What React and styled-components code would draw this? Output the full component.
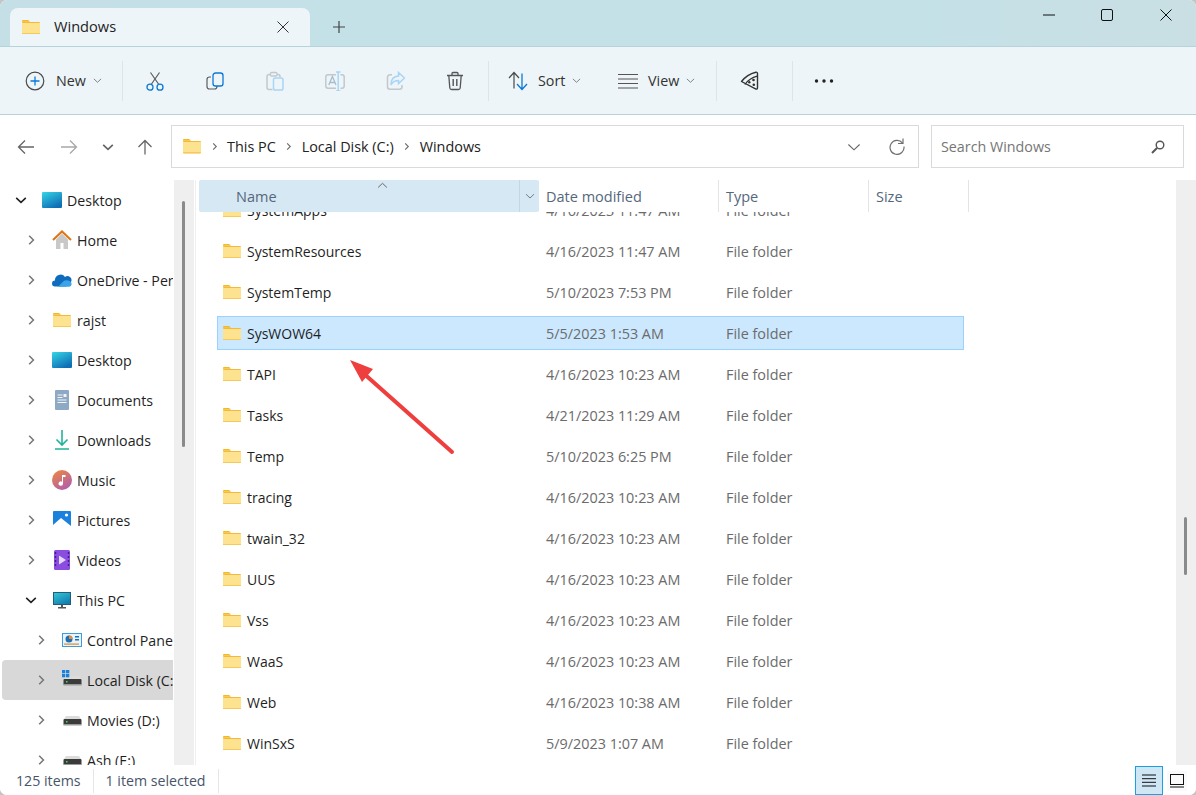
import React from "react";
import styled, { createGlobalStyle } from "styled-components";

const Global = createGlobalStyle`
  html, body { margin: 0; padding: 0; background: #c4c4c4; }
  body { font-family: "Open Sans", "Noto Sans", sans-serif; font-size: 14px; color: #1b1b1b; }
  svg { display: block; flex: none; }
`;

const Win = styled.div`
  position: relative;
  width: 1196px;
  height: 795px;
  display: flex;
  flex-direction: column;
  background: #fff;
  border-radius: 7px;
  overflow: hidden;
`;

const TitleBar = styled.div`
  height: 46px;
  display: flex;
  align-items: flex-end;
  padding-left: 10px;
  background: linear-gradient(90deg, #c4dfe5 0, #c4e1e8 20%, #c4e1e8 75%, #c9dfe3 100%);
  border-bottom: 1px solid #b6d3db;
`;

const Tab = styled.div`
  width: 300px;
  height: 38px;
  box-sizing: border-box;
  padding: 0 21px 0 12px;
  display: flex;
  align-items: center;
  background: #eef5f8;
  border-radius: 8px 8px 0 0;
`;

const TabTitle = styled.span`
  margin-left: 14px;
  flex: 1;
  font-size: 14.6px;
  font-weight: 500;
  color: #222;
  padding-bottom: 3px;
`;

const PlusButton = styled.div`
  width: 58px;
  height: 38px;
  display: flex;
  align-items: center;
  justify-content: center;
`;

const WinControls = styled.div`
  margin-left: auto;
  align-self: flex-start;
  display: flex;
  padding-right: 1px;
`;

const WinButton = styled.div`
  width: 58.5px;
  height: 29px;
  display: flex;
  align-items: center;
  justify-content: center;
`;

const Toolbar = styled.div`
  height: 68px;
  box-sizing: border-box;
  display: flex;
  align-items: center;
  background: #edf5f8;
  border-bottom: 1px solid #b6d3db;
`;

const ToolSep = styled.div`
  width: 1px;
  height: 40px;
  background: #dde5e8;
  flex: none;
`;

const IconButton = styled.div`
  width: 60px;
  height: 40px;
  display: flex;
  align-items: center;
  justify-content: center;
  flex: none;
`;

const ToolButton = styled.div`
  width: ${(p) => p.$w}px;
  padding-left: ${(p) => p.$pad}px;
  box-sizing: border-box;
  display: flex;
  align-items: center;
  flex: none;
  height: 40px;
  color: #333;
  font-size: 14.3px;
`;

const ToolLabel = styled.span`
  margin-left: ${(p) => p.$gap || 10}px;
  margin-right: 7px;
`;

const Group = styled.div`
  display: flex;
  align-items: center;
  margin: ${(p) => p.$m || "0"};
`;

const NavRow = styled.div`
  height: 65px;
  box-sizing: border-box;
  padding: 10px 12px 0 0;
  display: flex;
  align-items: flex-start;
`;

const NavButtons = styled.div`
  width: 171px;
  height: 43px;
  flex: none;
  display: grid;
  grid-template-columns: 5px 42px 44px 34px 40px;
  align-items: center;
  justify-items: center;
`;

const AddressBox = styled.div`
  width: 748px;
  height: 43px;
  box-sizing: border-box;
  border: 1.5px solid #dadada;
  display: flex;
  align-items: center;
  padding-left: 11px;
  color: #222;
  font-size: 14.4px;
`;

const Crumb = styled.span`
  padding-bottom: 1px;
`;

const CrumbChevron = styled.div`
  width: 26px;
  display: flex;
  justify-content: center;
`;

const AddressTools = styled.div`
  margin-left: auto;
  display: flex;
  align-items: center;
  gap: 27px;
  padding-right: 13px;
`;

const SearchBox = styled.div`
  margin-left: 12px;
  width: 253px;
  height: 43px;
  box-sizing: border-box;
  border: 1.5px solid #dadada;
  display: flex;
  align-items: center;
  justify-content: space-between;
  padding: 0 18px 0 9px;
  color: #767676;
  font-size: 14.3px;
`;

const Body = styled.div`
  flex: 1;
  min-height: 0;
  display: flex;
`;

const Tree = styled.div`
  width: 173px;
  flex: none;
  overflow: hidden;
`;

const TreeRow = styled.div`
  width: 171px;
  height: 40px;
  margin-left: 2px;
  box-sizing: border-box;
  padding-left: ${(p) => 12 + p.$level * 10}px;
  display: flex;
  align-items: center;
  white-space: nowrap;
  overflow: hidden;
  font-size: 14.2px;
  color: #1f1f1f;
  background: ${(p) => (p.$active ? "#d8d8d8" : "transparent")};
  border-radius: 4px 0 0 4px;
`;

const TreeChevron = styled.div`
  width: 14px;
  display: flex;
  justify-content: center;
  flex: none;
  margin-right: 14px;
`;

const TreeIcon = styled.div`
  width: 20px;
  display: flex;
  justify-content: center;
  flex: none;
  margin-right: 5px;
`;

const Gutter = styled.div`
  width: ${(p) => p.$w}px;
  flex: none;
  margin-left: ${(p) => p.$ml || 0}px;
  background: #efefef;
  display: flex;
  flex-direction: column;
`;

const Thumb = styled.div`
  width: 3px;
  height: ${(p) => p.$h}px;
  margin: ${(p) => p.$top}px 0 0 ${(p) => p.$left}px;
  background: #8a8a8a;
  border-radius: 2px;
`;

const Main = styled.div`
  flex: 1;
  min-width: 0;
  display: flex;
  flex-direction: column;
  border-left: 1px solid #efefef;
  margin-left: 1px;
  padding-left: 3px;
`;

const Header = styled.div`
  height: 32px;
  flex: none;
  display: flex;
  font-size: 14.5px;
  color: #55677b;
  background: #fff;
`;

const HeadCell = styled.div`
  position: relative;
  width: ${(p) => p.$w}px;
  box-sizing: border-box;
  padding-left: ${(p) => p.$pad}px;
  display: flex;
  align-items: center;
  background: ${(p) => (p.$name ? "#d7e8f5" : "transparent")};
  border-radius: ${(p) => (p.$name ? "2px" : "0")};
  border-right: ${(p) => (p.$name ? "none" : "1px solid #e4e4e4")};
`;

const SortCaret = styled.div`
  position: absolute;
  left: 178px;
  top: 0;
`;

const HeadSplit = styled.div`
  position: absolute;
  right: 0;
  top: 0;
  bottom: 0;
  width: 19px;
  border-left: 1px solid #c3d6e4;
  display: flex;
  align-items: center;
  justify-content: center;
`;

const FileList = styled.div`
  flex: 1;
  min-height: 0;
  overflow: hidden;
`;

const FileScroll = styled.div`
  margin-top: -19px;
  display: flex;
  flex-direction: column;
  gap: 7px;
`;

const FileRow = styled.div`
  width: 747px;
  height: 34px;
  margin-left: 18px;
  flex: none;
  box-sizing: border-box;
  display: flex;
  align-items: center;
  font-size: 14.4px;
  background: ${(p) => (p.$selected ? "#cce8ff" : "transparent")};
  border: 1px solid ${(p) => (p.$selected ? "#99d1ff" : "transparent")};
`;

const FileName = styled.div`
  width: 328px;
  padding-left: 5px;
  box-sizing: border-box;
  display: flex;
  align-items: center;
  gap: 6px;
  font-size: 14px;
  color: #1f1f1f;
`;

const FileMeta = styled.div`
  width: ${(p) => p.$w}px;
  color: #6b6b6b;
  white-space: nowrap;
`;

const StatusBar = styled.div`
  height: 30px;
  flex: none;
  box-sizing: border-box;
  padding: 1px 9px 0 16px;
  display: flex;
  align-items: center;
  font-size: 14.2px;
  color: #47556a;
  background: #fff;
`;

const StatusText = styled.span`
  padding-right: 12px;
  margin-right: 12px;
  border-right: 1px solid #e6e6e6;
  line-height: 24px;
`;

const ViewToggle = styled.div`
  margin-left: auto;
  display: flex;
  align-items: center;
  gap: 4px;
`;

const ViewButton = styled.div`
  width: ${(p) => (p.$on ? 28 : 20)}px;
  height: ${(p) => (p.$on ? 29 : 20)}px;
  box-sizing: border-box;
  display: flex;
  align-items: center;
  justify-content: center;
  background: ${(p) => (p.$on ? "#cfe7f5" : "#fafafa")};
  border: ${(p) => (p.$on ? "1px solid #1ba1e2" : "none")};
`;

const ArrowLayer = styled.svg`
  position: absolute;
  left: 340px;
  top: 350px;
  pointer-events: none;
`;

const Folder = ({ size = 18 }) => (
  <svg width={size} height={size * 0.8} viewBox="0 0 18 14.4">
    <path d="M0 1.2C0 .5.5 0 1.2 0h4.4c.5 0 .9.2 1.2.5L8 1.8h-8z" fill="#f5b81f" />
    <rect x="0" y="2" width="18" height="12.4" rx="1" fill="#f3b93a" />
    <rect x="0" y="3" width="18" height="10.4" fill="#fde28f" />
  </svg>
);

const Chev = ({ dir = "right", color = "#808080", s = 10, w = 1.4 }) => {
  const paths = {
    right: "M3.5 1.5L7 5 3.5 8.5",
    down: "M1 3.2L5 7l4-3.8",
    up: "M1 6.8L5 3l4 3.8",
  };
  return (
    <svg width={s} height={s} viewBox="0 0 10 10">
      <path d={paths[dir]} fill="none" stroke={color} strokeWidth={w} />
    </svg>
  );
};

const I20 = ({ children }) => (
  <svg width="20" height="20" viewBox="0 0 20 20" fill="none">
    {children}
  </svg>
);

const IconNew = () => (
  <I20>
    <circle cx="10" cy="10" r="8.8" stroke="#4a4a4a" strokeWidth="1.2" />
    <path d="M10 5.5v9M5.5 10h9" stroke="#0a78d4" strokeWidth="1.3" />
  </I20>
);
const IconCut = () => (
  <I20>
    <path d="M5.5 1.5L13.5 13M14.5 1.5L6.5 13" stroke="#5c5c5c" strokeWidth="1.2" />
    <circle cx="5" cy="16.2" r="3" stroke="#0a78d4" strokeWidth="1.3" />
    <circle cx="15" cy="16.2" r="3" stroke="#0a78d4" strokeWidth="1.3" />
  </I20>
);
const IconCopy = () => (
  <I20>
    <path d="M6 6H4.500A2.500 2.500 0 002 8.500v7A2.500 2.500 0 004.500 18h5A2.500 2.500 0 0012 15.500V15" stroke="#5c5c5c" strokeWidth="1.2" />
    <rect x="8" y="2" width="10" height="13" rx="2.600" stroke="#0a78d4" strokeWidth="1.3" />
  </I20>
);
const IconPaste = () => (
  <I20>
    <path d="M6 3.500H4A2 2 0 002 5.500v11A2 2 0 004 18.500h3.500" stroke="#c2c8cb" strokeWidth="1.500" />
    <path d="M12 3.500h1A2 2 0 0115 5.500V6" stroke="#c2c8cb" strokeWidth="1.500" />
    <rect x="5.500" y="1.500" width="6.500" height="3.500" rx="1" stroke="#c2c8cb" strokeWidth="1.300" />
    <rect x="8.500" y="7" width="9.500" height="12" rx="1.800" stroke="#a8d5f5" strokeWidth="1.500" />
  </I20>
);
const IconRename = () => (
  <I20>
    <path d="M11 3.800H3A2.300 2.300 0 00.8 6v9A2.300 2.300 0 003 17.200H11M15.500 3.800H17A2.300 2.300 0 0119.200 6v9a2.300 2.300 0 01-2.200 2.200h-1.500" stroke="#c2c8cb" strokeWidth="1.500" />
    <path d="M3.800 14l3.600-8.500L11 14M5 11.500h4.800" stroke="#a9bccb" strokeWidth="1.300" />
    <path d="M11 1h4.500M11 20h4.500M13.200 1v19" stroke="#a8d5f5" strokeWidth="1.500" />
  </I20>
);
const IconShare = () => (
  <I20>
    <path d="M7 3.800H5A2.500 2.500 0 002.500 6.300v9.400A2.500 2.500 0 005 18.200h9.500a2.500 2.500 0 002.500-2.500V14" stroke="#c2c8cb" strokeWidth="1.500" />
    <path d="M13.500 1.500L19.500 7l-6 5.500V9.500C10 9.500 7.500 11 6 14c0-5.500 3-8.800 7.500-9z" stroke="#a8d5f5" strokeWidth="1.500" />
  </I20>
);
const IconTrash = () => (
  <I20>
    <path d="M2 4.500h16M7 4V2.500A1 1 0 018 1.500h4a1 1 0 011 1V4M3.800 4.500l1 12.500a1.800 1.800 0 001.800 1.500h6.800a1.800 1.800 0 001.800-1.500l1-12.500" stroke="#555" strokeWidth="1.300" />
    <path d="M8.200 8v7M11.800 8v7" stroke="#555" strokeWidth="1.400" />
  </I20>
);
const IconSort = () => (
  <I20>
    <path d="M1 7l5-5.500L11 7M6 1.500v16" stroke="#4a4a4a" strokeWidth="1.200" />
    <path d="M9 13l5 5.500 5-5.500M14 18.500v-16" stroke="#0a78d4" strokeWidth="1.300" />
  </I20>
);
const IconView = () => (
  <I20>
    <path d="M0 3.500h20M0 8h20M0 12.500h20M0 17h20" stroke="#555" strokeWidth="1.200" />
  </I20>
);
const IconPizza = () => (
  <I20>
    <path d="M1.500 10.500C5 6 10.500 2.500 15.800 1.200c1-.2 1.700.4 1.700 1.300V16.800c0 1.200-1.200 1.700-2 1z" stroke="#333" strokeWidth="1.400" strokeLinejoin="round" />
    <path d="M4.800 13.500C7.500 9.800 12 6.500 17.200 5.200" stroke="#333" strokeWidth="1.200" />
    <circle cx="13.500" cy="9" r="1.300" fill="#333" />
    <circle cx="9.300" cy="11.200" r="1.200" fill="#333" />
    <circle cx="13.800" cy="13.800" r="1.300" fill="#333" />
  </I20>
);
const IconDots = () => (
  <svg width="20" height="4" viewBox="0 0 20 4">
    <circle cx="2.500" cy="2" r="1.700" fill="#222" />
    <circle cx="10" cy="2" r="1.700" fill="#222" />
    <circle cx="17.500" cy="2" r="1.700" fill="#222" />
  </svg>
);

const NavArrow = ({ d, color }) => (
  <svg width="18" height="16" viewBox="0 0 18 16" fill="none">
    <path d={d} stroke={color} strokeWidth="1.300" />
  </svg>
);

const Gradient = ({ id, from, to }) => (
  <linearGradient id={id} x1="0" y1="0" x2="0.6" y2="1">
    <stop offset="0" stopColor={from} />
    <stop offset="1" stopColor={to} />
  </linearGradient>
);

const DesktopIcon = ({ h = 16 }) => (
  <svg width="20" height={h} viewBox="0 0 20 16">
    <defs>
      <Gradient id="dsk" from="#35d6e6" to="#0f6fb5" />
    </defs>
    <rect width="20" height="16" rx="1" fill="url(#dsk)" />
  </svg>
);
const HomeIcon = () => (
  <I20>
    <path d="M4 9.500V19h4.500v-6h3v6H16V9.500L10 3.500z" fill="#c8c8c8" />
    <path d="M1 10l9-8.500L19 10" stroke="#e07412" strokeWidth="2" />
  </I20>
);
const CloudIcon = () => (
  <svg width="20" height="14" viewBox="0 0 20 14">
    <path d="M3 13.500A3 3 0 013 7.500 5.500 5.500 0 0113 4a4 4 0 016 5l-5 4.500z" fill="#0f6cbd" />
    <path d="M6 13.800L12 7.800c2-1 6-.5 7 1.500 1.500 2 0 4.500-2 4.500z" fill="#3ba3e8" />
  </svg>
);
const DocsIcon = () => (
  <svg width="14" height="20" viewBox="0 0 14 20">
    <rect width="14" height="20" rx="1" fill="#8ea9c4" />
    <path d="M2.500 5h5M2.500 7.500h5M2.500 10h9M2.500 12.500h9" stroke="#f2f5f8" strokeWidth="1" />
    <rect x="8.500" y="4" width="3" height="3" fill="#f2f5f8" />
  </svg>
);
const DownloadIcon = () => (
  <svg width="14" height="20" viewBox="0 0 14 20" fill="none">
    <path d="M7 0v15M1.500 9.500L7 15l5.500-5.500M0 19h14" stroke="#1fb49a" strokeWidth="1.600" />
  </svg>
);
const MusicIcon = () => (
  <svg width="20" height="20" viewBox="0 0 20 20">
    <defs>
      <Gradient id="mus" from="#ee8a3c" to="#b45fa8" />
    </defs>
    <circle cx="10" cy="10" r="10" fill="url(#mus)" />
    <path d="M10 5h3.500v2H11v6.500a2.200 2.200 0 11-1-1.800z" fill="#fff" />
  </svg>
);
const PicturesIcon = () => (
  <svg width="18" height="18" viewBox="0 0 18 18">
    <rect width="18" height="18" rx="1" fill="#1a82dc" />
    <path d="M0 18v-4L8 7l10 8v3z" fill="#fff" />
    <circle cx="13.500" cy="4" r="1.600" fill="#fff" />
  </svg>
);
const VideosIcon = () => (
  <svg width="16" height="20" viewBox="0 0 16 20">
    <rect width="16" height="20" rx="1.500" fill="#8a4de0" />
    <path d="M5 5.500l7 4.500-7 4.500z" fill="#e4d8fa" />
    <path d="M1.500 2v16M14.500 2v16" stroke="#3c1f80" strokeWidth="1.400" strokeDasharray="2 2" />
  </svg>
);
const MonitorIcon = () => (
  <svg width="18" height="17" viewBox="0 0 18 17">
    <defs>
      <Gradient id="mon" from="#35c8d8" to="#137fb0" />
    </defs>
    <rect x=".5" y=".5" width="17" height="12" fill="url(#mon)" stroke="#1d5f78" />
    <rect x="8" y="13" width="2" height="2" fill="#555" />
    <rect x="5" y="15" width="8" height="1.500" fill="#555" />
  </svg>
);
const PanelIcon = () => (
  <svg width="20" height="14" viewBox="0 0 20 14">
    <rect x=".5" y=".5" width="19" height="13" fill="#e6f3fb" stroke="#3f9bdc" />
    <circle cx="7" cy="6" r="3.500" fill="#1a6fb8" />
    <path d="M7 6V2.500A3.500 3.500 0 0110.500 6z" fill="#f08a24" />
    <rect x="13" y="3" width="4" height="1.500" fill="#1a6fb8" />
    <rect x="13" y="6" width="4" height="1.500" fill="#1a6fb8" />
    <rect x="2" y="10.500" width="15" height="1.200" fill="#e08a30" />
  </svg>
);
const DiskIcon = ({ win }) => (
  <svg width="20" height="20" viewBox="0 0 20 20">
    <path d="M2 9l2-3h13l2 3z" fill="#dcdcdc" />
    <rect x="1.500" y="9" width="18" height="6" rx="1" fill="#3b3b3b" />
    <rect x="1.500" y="14" width="18" height="1.500" fill="#9a9a9a" />
    <rect x="4" y="11" width="1.500" height="1.500" fill="#3fe04f" />
    {win && (
      <g fill="#1a82dc">
        <rect x="0" y="0" width="3.300" height="3.300" />
        <rect x="4" y="0" width="3.300" height="3.300" />
        <rect x="0" y="4" width="3.300" height="3.300" />
        <rect x="4" y="4" width="3.300" height="3.300" />
      </g>
    )}
  </svg>
);

const treeItems = [
  { label: "Desktop", level: 0, open: true, icon: <DesktopIcon /> },
  { label: "Home", level: 1, icon: <HomeIcon /> },
  { label: "OneDrive - Personal", level: 1, icon: <CloudIcon /> },
  { label: "rajst", level: 1, icon: <Folder /> },
  { label: "Desktop", level: 1, icon: <DesktopIcon /> },
  { label: "Documents", level: 1, icon: <DocsIcon /> },
  { label: "Downloads", level: 1, icon: <DownloadIcon /> },
  { label: "Music", level: 1, icon: <MusicIcon /> },
  { label: "Pictures", level: 1, icon: <PicturesIcon /> },
  { label: "Videos", level: 1, icon: <VideosIcon /> },
  { label: "This PC", level: 1, open: true, icon: <MonitorIcon /> },
  { label: "Control Panel", level: 2, icon: <PanelIcon /> },
  { label: "Local Disk (C:)", level: 2, active: true, icon: <DiskIcon win /> },
  { label: "Movies (D:)", level: 2, icon: <DiskIcon /> },
  { label: "Ash (E:)", level: 2, icon: <DiskIcon /> },
];

const files = [
  ["SystemApps", "4/16/2023 11:47 AM"],
  ["SystemResources", "4/16/2023 11:47 AM"],
  ["SystemTemp", "5/10/2023 7:53 PM"],
  ["SysWOW64", "5/5/2023 1:53 AM"],
  ["TAPI", "4/16/2023 10:23 AM"],
  ["Tasks", "4/21/2023 11:29 AM"],
  ["Temp", "5/10/2023 6:25 PM"],
  ["tracing", "4/16/2023 10:23 AM"],
  ["twain_32", "4/16/2023 10:23 AM"],
  ["UUS", "4/16/2023 10:23 AM"],
  ["Vss", "4/16/2023 10:23 AM"],
  ["WaaS", "4/16/2023 10:23 AM"],
  ["Web", "4/16/2023 10:38 AM"],
  ["WinSxS", "5/9/2023 1:07 AM"],
];

export default function App() {
  return (
    <>
      <Global />
      <Win>
        <TitleBar>
          <Tab>
            <Folder />
            <TabTitle>Windows</TabTitle>
            <svg width="12" height="12" viewBox="0 0 12 12">
              <path d="M.5.500l11 11M11.500.500l-11 11" stroke="#333" strokeWidth="1" />
            </svg>
          </Tab>
          <PlusButton>
            <svg width="12" height="12" viewBox="0 0 12 12">
              <path d="M6 0v12M0 6h12" stroke="#444" strokeWidth="1.200" />
            </svg>
          </PlusButton>
          <WinControls>
            <WinButton>
              <svg width="12" height="2" viewBox="0 0 12 2">
                <path d="M0 1h12" stroke="#111" strokeWidth="1" />
              </svg>
            </WinButton>
            <WinButton>
              <svg width="12" height="12" viewBox="0 0 12 12">
                <rect x=".5" y=".5" width="11" height="11" rx="1.500" fill="none" stroke="#111" strokeWidth="1" />
              </svg>
            </WinButton>
            <WinButton>
              <svg width="12" height="12" viewBox="0 0 12 12">
                <path d="M.5.500l11 11M11.500.500l-11 11" stroke="#111" strokeWidth="1" />
              </svg>
            </WinButton>
          </WinControls>
        </TitleBar>

        <Toolbar>
          <ToolButton $w={122} $pad={25}>
            <IconNew />
            <ToolLabel $gap={11}>New</ToolLabel>
            <Chev dir="down" color="#777" s={9} w={1} />
          </ToolButton>
          <ToolSep />
          <Group $m="0 2px 0 2px">
            <IconButton><IconCut /></IconButton>
            <IconButton><IconCopy /></IconButton>
            <IconButton><IconPaste /></IconButton>
            <IconButton><IconRename /></IconButton>
            <IconButton><IconShare /></IconButton>
            <IconButton><IconTrash /></IconButton>
          </Group>
          <Group $m="0 0 0 1px"><ToolSep /></Group>
          <ToolButton $w={111} $pad={19}>
            <IconSort />
            <ToolLabel>Sort</ToolLabel>
            <Chev dir="down" color="#777" s={9} w={1} />
          </ToolButton>
          <ToolButton $w={116} $pad={18}>
            <IconView />
            <ToolLabel>View</ToolLabel>
            <Chev dir="down" color="#777" s={9} w={1} />
          </ToolButton>
          <ToolSep />
          <ToolButton $w={75} $pad={23}>
            <IconPizza />
          </ToolButton>
          <ToolSep />
          <ToolButton $w={60} $pad={21}>
            <IconDots />
          </ToolButton>
        </Toolbar>

        <NavRow>
          <NavButtons>
            <span />
            <NavArrow d="M17 8H2M8 1.500L1.500 8 8 14.500" color="#666" />
            <NavArrow d="M1 8h15M10 1.500L16.500 8 10 14.500" color="#a8a8a8" />
            <Chev dir="down" color="#666" s={12} />
            <NavArrow d="M9 15.500V1.500M2.500 8L9 1.500 15.500 8" color="#666" />
          </NavButtons>
          <AddressBox>
            <Folder />
            <CrumbChevron><Chev color="#6a6a6a" s={9} w={1.200} /></CrumbChevron>
            <Crumb>This PC</Crumb>
            <CrumbChevron><Chev color="#6a6a6a" s={9} w={1.200} /></CrumbChevron>
            <Crumb>Local Disk (C:)</Crumb>
            <CrumbChevron><Chev color="#6a6a6a" s={9} w={1.200} /></CrumbChevron>
            <Crumb>Windows</Crumb>
            <AddressTools>
              <Chev dir="down" color="#666" s={14} w={0.800} />
              <svg width="17" height="17" viewBox="0 0 17 17" fill="none">
                <path d="M14.500 5A7 7 0 1016 8.500" stroke="#707070" strokeWidth="1.200" />
                <path d="M15 .500V5.500h-5" stroke="#707070" strokeWidth="1.200" />
              </svg>
            </AddressTools>
          </AddressBox>
          <SearchBox>
            <span>Search Windows</span>
            <svg width="14" height="14" viewBox="0 0 14 14" fill="none">
              <circle cx="9" cy="5" r="3.800" stroke="#555" strokeWidth="1.400" />
              <path d="M6 8l-5 5" stroke="#555" strokeWidth="2" />
            </svg>
          </SearchBox>
        </NavRow>

        <Body>
          <Tree>
            {treeItems.map((item, i) => (
              <TreeRow key={i} $level={item.level} $active={item.active}>
                <TreeChevron>
                  {item.open ? (
                    <Chev dir="down" color="#222" s={12} w={1.300} />
                  ) : (
                    <Chev color="#777" s={12} w={1.300} />
                  )}
                </TreeChevron>
                <TreeIcon>{item.icon}</TreeIcon>
                <span>{item.label}</span>
              </TreeRow>
            ))}
          </Tree>
          <Gutter $w={20} $ml={1}>
            <Thumb $h={246} $top={21} $left={8} />
          </Gutter>
          <Main>
            <Header>
              <HeadCell $name $w={340} $pad={37}>
                Name
                <SortCaret><Chev dir="up" color="#666" s={11} w={0.900} /></SortCaret>
                <HeadSplit><Chev dir="down" color="#6c7f90" s={10} w={1} /></HeadSplit>
              </HeadCell>
              <HeadCell $w={180} $pad={7}>Date modified</HeadCell>
              <HeadCell $w={150} $pad={7}>Type</HeadCell>
              <HeadCell $w={100} $pad={7}>Size</HeadCell>
            </Header>
            <FileList>
              <FileScroll>
                {files.map(([name, date]) => (
                  <FileRow key={name} $selected={name === "SysWOW64"}>
                    <FileName>
                      <Folder />
                      <span>{name}</span>
                    </FileName>
                    <FileMeta $w={180}>{date}</FileMeta>
                    <FileMeta $w={150}>File folder</FileMeta>
                  </FileRow>
                ))}
              </FileScroll>
            </FileList>
          </Main>
          <Gutter $w={20}>
            <Thumb $h={58} $top={337} $left={8} />
          </Gutter>
        </Body>

        <StatusBar>
          <StatusText>125 items</StatusText>
          <StatusText>1 item selected</StatusText>
          <ViewToggle>
            <ViewButton $on>
              <svg width="14" height="13" viewBox="0 0 14 13">
                <path d="M0 1h14M0 4.700h14M0 8.300h14M0 12h14" stroke="#111" strokeWidth="1" />
              </svg>
            </ViewButton>
            <ViewButton>
              <svg width="14" height="14" viewBox="0 0 14 14" fill="none">
                <rect x=".5" y=".5" width="13" height="10" stroke="#111" strokeWidth="1" />
                <path d="M0 13h14" stroke="#111" strokeWidth="1" />
              </svg>
            </ViewButton>
          </ViewToggle>
        </StatusBar>

        <ArrowLayer width="120" height="110" viewBox="340 350 120 110">
          <path d="M452 452L362 372" stroke="#ee3e3e" strokeWidth="4" strokeLinecap="round" />
          <path d="M350 360l23 9-11 13z" fill="#ee3e3e" />
        </ArrowLayer>
      </Win>
    </>
  );
}
